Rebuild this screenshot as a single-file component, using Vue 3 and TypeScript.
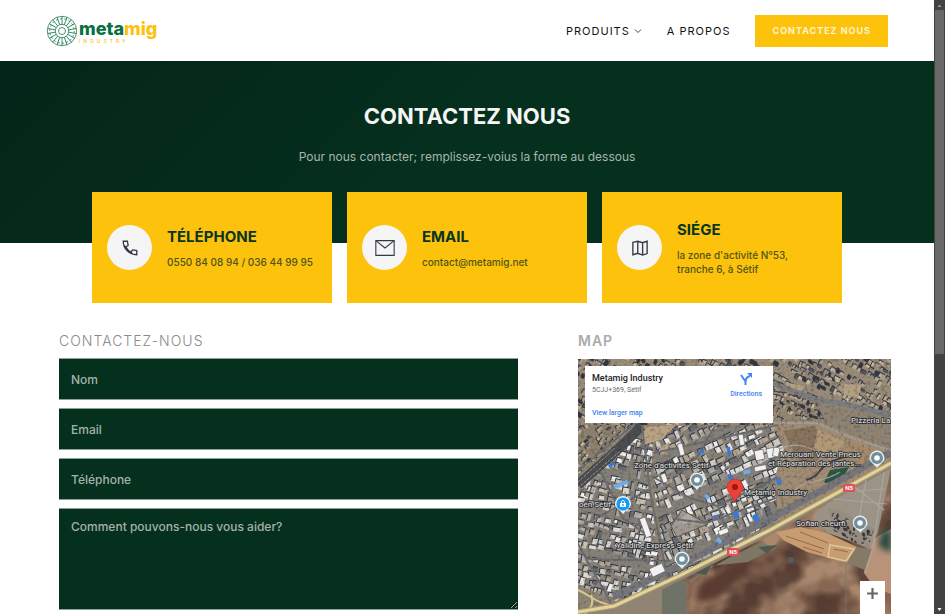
<script setup lang="ts">
import { ref } from 'vue'

interface Block { x: number; y: number; w: number; h: number; turn: number; fill: string }
interface District { id: string; clip: string; angle: number; base: string; blocks: Block[] }

const form = ref({ name: '', email: '', phone: '', message: '' })

const contacts = [
  { icon: 'phone', title: 'TÉLÉPHONE', lines: ['0550 84 08 94 / 036 44 99 95'] },
  { icon: 'mail', title: 'EMAIL', lines: ['contact@metamig.net'] },
  { icon: 'map', title: 'SIÉGE', lines: ["la zone d'activité N°53,", 'tranche 6, à Sétif'] },
]

const spokes = Array.from({ length: 18 }, (_, i) => i * 20)

/* Deterministic generator, so that the aerial view is the same on each load. */
function createRandom(seed: number) {
  let s = seed
  return () => {
    s = (s * 1664525 + 1013904223) % 4294967296
    return s / 4294967296
  }
}

function buildDistrict(
  id: string, clip: string, angle: number, base: string,
  cell: number, scale: number, palette: string[], seed: number,
): District {
  const rnd = createRandom(seed)
  const blocks: Block[] = []
  let row = 0
  for (let y = -220; y < 220; y += cell) {
    row++
    const street = row % 6 === 0
    for (let x = -220; x < 220; x += cell * (0.5 + rnd() * 0.8)) {
      if (street || rnd() < 0.12) continue
      const tall = rnd() < 0.3
      const w = cell * scale * (tall ? 0.4 + rnd() * 0.3 : 0.6 + rnd() * 0.8)
      const h = cell * scale * (tall ? 0.9 + rnd() * 0.5 : 0.4 + rnd() * 0.5)
      const fill = palette[Math.floor(rnd() * palette.length)]
      blocks.push({ x: x + rnd() * 2, y: y + rnd() * 3, w, h, turn: rnd() * 12 - 6, fill })
    }
  }
  return { id, clip, angle, base, blocks }
}

const industrial = ['#f4f3f1', '#e8e5e1', '#cfcbc5', '#b3afa9', '#99958f', '#cdc0ab', '#b3a591', '#6b6c70', '#dedad5']
const housing = ['#b9ad9a', '#a59b8e', '#8f8981', '#c8b799', '#55565a', '#ada28e', '#34363d']

const districts: District[] = [
  buildDistrict('north', '0,0 313,0 313,54 262,42 239,39 195,22 195,66 0,66', 30, '#998b77', 6, 0.8, housing, 11),
  buildDistrict('northeast', '195,27 238,43 246,60 195,62', 20, '#94866f', 5, 0.8, housing, 23),
  buildDistrict('west', '0,132 62,70 76,72 72,130 84,228 38,242 0,226', 14, '#858078', 7, 0.95, industrial, 37),
  buildDistrict('centre', '78,67 196,66 206,90 196,120 200,160 90,222 76,130', -24, '#858078', 8, 0.95, industrial, 53),
  buildDistrict('corner', '0,66 56,66 0,116', -42, '#8d816e', 6, 0.7, housing, 71),
  buildDistrict('east', '250,150 262,151 296,170 290,190 278,184 256,172', 25, '#958c7e', 5, 0.6, ['#34363d', '#9b958c'], 83),
]

const streets = [
  'M0 112 62 60 M64 66 72 132 90 222 M76 94 148 78 200 66',
  'M75 118 112 139 139 147 200 118 M96 160 128 164 198 139 M8 200 92 202 M100 108 118 100 137 67',
  'M0 169 72 130 M23 113 45 159 69 176 M140 147 158 197 M0 185 33 244',
]
const fieldRoads = [
  'M238 64 272 78 313 91 M197 92 C222 80 228 88 260 101 M216 133 C225 119 242 126 262 113',
  'M255 140 309 145 M264 133 307 130 M274 126 306 151 M288 121 280 165 M306 113 295 188 287 214',
]
const blueRoofs = [
  { x: 35, y: 126, a: -20, w: 15, h: 4 }, { x: 30, y: 106, a: -28, w: 7, h: 3 },
  { x: 153, y: 115, a: 65, w: 9, h: 4 }, { x: 165, y: 112, a: -15, w: 7, h: 4 },
  { x: 155, y: 153, a: -15, w: 5, h: 7 }, { x: 174, y: 157, a: -30, w: 5, h: 8 },
  { x: 140, y: 178, a: 40, w: 6, h: 4 }, { x: 120, y: 92, a: -10, w: 6, h: 3 },
  { x: 149, y: 88, a: -5, w: 3, h: 9 }, { x: 126, y: 137, a: -35, w: 4, h: 5 },
  { x: 134, y: 157, a: -15, w: 6, h: 2 }, { x: 198, y: 120, a: -10, w: 5, h: 6 },
]
const whiteRoofs = [
  { x: 67, y: 158, a: 70, w: 20, h: 6 }, { x: 71, y: 210, a: -25, w: 14, h: 9 },
  { x: 87, y: 114, a: 70, w: 9, h: 5 }, { x: 165, y: 75, a: 80, w: 11, h: 5 },
  { x: 176, y: 92, a: -12, w: 9, h: 10 }, { x: 188, y: 90, a: -12, w: 8, h: 10 },
  { x: 104, y: 84, a: 75, w: 12, h: 5 }, { x: 140, y: 172, a: -20, w: 10, h: 5 },
  { x: 176, y: 108, a: -12, w: 12, h: 5 }, { x: 196, y: 88, a: 10, w: 6, h: 9 },
]
const places = [
  { x: 119, y: 121 }, { x: 299, y: 99 }, { x: 282, y: 164 }, { x: 104, y: 200 },
]
const labels = [
  { x: 56, y: 109, text: "Zone d'activités Sétif" },
  { x: 202, y: 98, text: 'Merouani Vente Pneus' },
  { x: 190, y: 107, text: 'et Réparation des jantes...' },
  { x: 166, y: 136, text: 'Metamig Industry' },
  { x: 1, y: 148, text: 'oën Sétif' },
  { x: 38, y: 189, text: 'Yalidine Express Sétif' },
  { x: 218, y: 167, text: 'Sofian cheurfi' },
  { x: 273, y: 64, text: 'Pizzeria La' },
]
const badges = [{ x: 155, y: 193 }, { x: 271, y: 129 }]
</script>

<template>
  <div class="window">
    <div class="page">
      <header class="topbar">
        <a class="brand" href="#">
          <svg class="brand-mark" viewBox="0 0 32 32" aria-hidden="true">
            <g fill="none" stroke="#1d7a50" stroke-width="0.8">
              <circle cx="16" cy="16" r="14.7" />
              <circle cx="16" cy="16" r="12.2" stroke-dasharray="2.2 2.05" />
              <circle cx="16" cy="16" r="6.7" />
              <circle cx="16" cy="16" r="3.5" />
              <path v-for="a in spokes" :key="a" d="M16 9.300V1.300" :transform="`rotate(${a} 16 16)`" />
            </g>
          </svg>
          <span class="brand-text">
            <span class="brand-name">meta<span class="accent">mig</span></span>
            <span class="brand-sub">INDUSTRY</span>
          </span>
        </a>
        <nav class="nav">
          <a href="#produits">PRODUITS
            <svg class="chevron" viewBox="0 0 8 8" aria-hidden="true"><path d="M1 2.500 4 5.500 7 2.500" fill="none" stroke="#444" /></svg>
          </a>
          <a href="#a-propos">A PROPOS</a>
          <a class="cta" href="#contact">CONTACTEZ NOUS</a>
        </nav>
      </header>

      <section class="hero">
        <h1>CONTACTEZ NOUS</h1>
        <p>Pour nous contacter; remplissez-voius la forme au dessous</p>
      </section>

      <section class="cards">
        <article v-for="c in contacts" :key="c.title" class="card">
          <span class="disc">
            <svg viewBox="0 0 24 24" aria-hidden="true" :class="c.icon">
              <path v-if="c.icon === 'phone'" d="M3 3h5.500l1 5.500-3 2.200c1.600 3 3.800 5.200 6.800 6.800l2.200-3 5.500 1V21C11 21 3 13 3 3ZM6.500 10.700 3.800 8.500M13.300 17.500l2.200 2.700" />
              <template v-else-if="c.icon === 'mail'">
                <path d="M2 4h20v16H2Z" />
                <path d="m2 4 10 8L22 4" />
              </template>
              <path v-else d="M2.500 4.500 9 3l6.500 2L21.500 3v16.500l-6 2L9 19l-6.500 2ZM9 3v16M15.500 5v16.500" />
            </svg>
          </span>
          <div>
            <h2>{{ c.title }}</h2>
            <p><span v-for="l in c.lines" :key="l">{{ l }}</span></p>
          </div>
        </article>
      </section>

      <main class="content">
        <form id="contact" @submit.prevent>
          <h3>CONTACTEZ-NOUS</h3>
          <input v-model="form.name" type="text" placeholder="Nom" aria-label="Nom">
          <input v-model="form.email" type="email" placeholder="Email" aria-label="Email">
          <input v-model="form.phone" type="tel" placeholder="Téléphone" aria-label="Téléphone">
          <textarea v-model="form.message" placeholder="Comment pouvons-nous vous aider?" aria-label="Comment pouvons-nous vous aider?" />
        </form>

        <section class="location">
          <h3>MAP</h3>
          <div class="map">
            <svg class="aerial" viewBox="0 0 313 300" preserveAspectRatio="xMinYMin slice" aria-hidden="true">
              <defs>
                <filter id="grain" x="0" y="0" width="100%" height="100%" color-interpolation-filters="sRGB">
                  <feTurbulence type="fractalNoise" baseFrequency="0.3" numOctaves="3" seed="4" />
                  <feColorMatrix values="0 0 0 0 0.12  0 0 0 0 0.13  0 0 0 0 0.17  3.5 0 0 0 -1.750" />
                </filter>
                <filter id="soil" x="0" y="0" width="100%" height="100%" color-interpolation-filters="sRGB">
                  <feTurbulence type="fractalNoise" baseFrequency="0.022 0.028" numOctaves="3" seed="9" />
                  <feColorMatrix values="0 0 0 0 0.29  0 0 0 0 0.2  0 0 0 0 0.17  4 0 0 0 -1.700" />
                </filter>
                <filter id="light" x="0" y="0" width="100%" height="100%" color-interpolation-filters="sRGB">
                  <feTurbulence type="fractalNoise" baseFrequency="0.026" numOctaves="3" seed="21" />
                  <feColorMatrix values="0 0 0 0 0.7  0 0 0 0 0.57  0 0 0 0 0.46  0 5 0 0 -2.200" />
                </filter>
                <filter id="soft"><feGaussianBlur stdDeviation="3" /></filter>
                <filter id="lens" x="0" y="0" width="100%" height="100%" color-interpolation-filters="sRGB"><feGaussianBlur stdDeviation="0.4" /></filter>
                <clipPath id="south"><path d="M84 231 192 176 313 109V300H84Z" /></clipPath>
                <clipPath id="urban"><path d="M0 0H313V104L192 171 36 247 0 253Z" /></clipPath>
                <clipPath v-for="d in districts" :id="`clip-${d.id}`" :key="d.id"><polygon :points="d.clip" /></clipPath>
              </defs>

              <g filter="url(#lens)">
                <rect width="313" height="300" fill="#8f8473" />
                <path d="M195 62 240 62 313 92V108L200 165Z" fill="#a08b73" />
                <path d="M205 72 235 67 252 92 225 110Z" fill="#88745d" />
                <path d="M240 70 267 83 252 101 236 89Z" fill="#b29877" />
                <path d="M272 82 308 96 300 108 262 98Z" fill="#a4896b" />
                <path d="M252 111 271 108 263 123 246 124Z" fill="#2c5845" />

                <g clip-path="url(#south)">
                  <rect x="84" y="105" width="229" height="195" fill="#876753" />
                  <rect x="84" y="105" width="229" height="195" filter="url(#light)" opacity="0.8" />
                  <rect x="84" y="105" width="229" height="195" filter="url(#soil)" opacity="0.8" />
                  <path d="M120 226 152 205 176 196 170 214 140 240 118 244Z" fill="#583b30" filter="url(#soft)" />
                  <path d="M84 222 108 222 108 300H84Z" fill="#6f7266" />
                  <path d="M110 222 152 198 182 184 198 188 170 203 132 207 114 224Z" fill="#7f7766" />
                  <path d="M116 214 134 205 128 216ZM180 188 200 186 188 194Z" fill="#4a5b52" />
                  <path d="M290 183 313 170V235L296 228 286 214Z" fill="#b8937a" />
                  <path d="M303 175 313 168V194L300 187Z" fill="#284941" filter="url(#soft)" />
                  <path d="M255 139 313 109 300 173 292 189 250 174 235 157Z" fill="#9a9386" />
                  <path d="M198 173 222 168 249 174 279 188 269 204 229 193 205 181Z" fill="#c79c71" />
                  <path d="M252 186 276 190 268 202 250 198Z" fill="none" stroke="#dec79c" stroke-width="1.500" />
                  <path d="M208 177 246 190M222 173 250 184M225 188 244 194M256 190 270 193" fill="none" stroke="#94694a" />
                  <path d="M269 204 279 188 294 190 287 211Z" fill="#857968" />
                  <circle cx="213" cy="201" r="3" fill="#545d66" />
                  <path d="M268 202V300M109 222V300" stroke="#837a71" stroke-width="0.700" />
                </g>

                <g v-for="d in districts" :key="d.id" :clip-path="`url(#clip-${d.id})`">
                  <polygon :points="d.clip" :fill="d.base" />
                  <g :transform="`translate(140 110) rotate(${d.angle})`">
                    <g v-for="(b, i) in d.blocks" :key="i" :transform="`rotate(${b.turn} ${b.x} ${b.y})`">
                      <rect :x="b.x - 1" :y="b.y - 1" :width="b.w" :height="b.h" fill="#363a43" />
                      <rect :x="b.x" :y="b.y" :width="b.w" :height="b.h" :fill="b.fill" />
                    </g>
                  </g>
                </g>

                <path d="M200 22 226 27 222 34 200 20ZM262 24 284 26 280 38 266 36Z" fill="#b5a080" />
                <path d="M62 68 98 66 84 80 66 86ZM80 88 92 84 88 96Z" fill="#b9a384" />
                <path d="M93 167 104 151 130 165 99 178Z" fill="#9f9991" stroke="#5b5751" />
                <path d="M100 165 109 154 121 164Z" fill="#b3ada4" />
                <g fill="none" stroke-linejoin="round">
                  <path d="M0 126 38 92 64 67" stroke="#4b4d50" stroke-width="10" />
                  <path d="M0 123 37 89 M0 129 42 92" stroke="#9b9690" stroke-dasharray="3 1" />
                  <path v-for="s in streets" :key="s" :d="s" stroke="#6c6d70" stroke-width="2" />
                  <path v-for="s in fieldRoads" :key="s" :d="s" stroke="#aca69b" stroke-width="1.200" />
                  <path d="M228 121C248 115 234 108 266 98" stroke="#424548" stroke-width="2" />
                  <path d="M195 24 239 41 262 44 313 56" stroke="#7d7d80" stroke-width="5" />
                  <path d="M195 64 239 64 272 78 313 92" stroke="#a09b93" stroke-width="2" />
                  <path d="M35 238 96 209 157 178 192 160 313 93" stroke="#77767a" stroke-width="7" />
                </g>
                <g clip-path="url(#urban)">
                  <rect width="313" height="300" filter="url(#grain)" opacity="0.25" />
                </g>
                <rect
                  v-for="(r, i) in whiteRoofs" :key="`white-${i}`" :x="r.x" :y="r.y" :width="r.w" :height="r.h"
                  :transform="`rotate(${r.a} ${r.x} ${r.y})`" fill="#f1f1f0" stroke="#55575c" stroke-width="0.600"
                />
                <rect
                  v-for="(r, i) in blueRoofs" :key="`blue-${i}`" :x="r.x" :y="r.y" :width="r.w" :height="r.h"
                  :transform="`rotate(${r.a} ${r.x} ${r.y})`" :fill="i % 3 === 0 ? '#6daeea' : '#3978d4'"
                />
                <g fill="none">
                  <path d="M0 231C12 236 20 246 40 247 M13 236C18 248 7 256 0 260" stroke="#d6c791" stroke-width="2" />
                  <path d="M0 253 36 247 103 216 192 171 313 104" stroke="#ab9b70" stroke-width="5" />
                  <path d="M0 253 36 247 103 216 192 171 313 104" stroke="#e3d49b" stroke-width="3" />
                </g>
              </g>

              <g v-for="b in badges" :key="b.x">
                <rect :x="b.x - 6" :y="b.y - 4" width="12" height="8" rx="1" fill="#dc5258" />
                <text class="badge" :x="b.x" :y="b.y + 2" text-anchor="middle">N5</text>
              </g>
              <text v-for="l in labels" :key="l.text" class="label" :x="l.x" :y="l.y">{{ l.text }}</text>
              <g v-for="p in places" :key="p.x" :transform="`translate(${p.x} ${p.y})`">
                <path d="M-7.500 0a7.500 7.500 0 1 1 15 0C7.500 4 3 6 0 10-3 6-7.500 4-7.500 0Z" fill="#e6edf0" />
                <circle r="6" fill="#708e9a" />
                <circle r="2.800" fill="#fff" />
              </g>
              <g transform="translate(45 145)">
                <path d="M-8 0a8 8 0 1 1 16 0C8 4 3 6 0 10-3 6-8 4-8 0Z" fill="#e9f4fc" />
                <circle r="6.600" fill="#159bf3" />
                <path d="M-3-1h6v4h-6Z" fill="#fff" />
                <path d="M-1.500-1v-1a1.500 1.500 0 0 1 3 0v1" fill="none" stroke="#fff" stroke-width="0.800" />
                <circle cy="1" r="0.900" fill="#159bf3" />
              </g>
              <g transform="translate(157 129)">
                <path d="M0 15C-1 8-8 6-8-1a8 8 0 0 1 16 0C8 6 1 8 0 15Z" fill="#ea4335" stroke="#c5221f" stroke-width="0.500" />
                <circle r="3" cy="-1" fill="#a61513" />
              </g>
            </svg>

            <div class="place">
              <div class="place-info">
                <strong>Metamig Industry</strong>
                <span>5CJJ+369, Sétif</span>
                <a href="#map">View larger map</a>
              </div>
              <a class="directions" href="#directions">
                <svg viewBox="0 0 14 14" aria-hidden="true">
                  <path d="M6.500 13V9.500L2 3M6.500 9.500C7 6 8 4.500 11 4" fill="none" stroke="#4285f4" stroke-width="2" />
                  <path d="M8 1h5v5Z" fill="#4285f4" />
                </svg>
                Directions
              </a>
            </div>
            <button class="zoom" type="button" aria-label="Zoom">
              <svg viewBox="0 0 12 12" aria-hidden="true"><path d="M6 1v10M1 6h10" stroke="#666" stroke-width="2" /></svg>
            </button>
          </div>
        </section>
      </main>
    </div>
    <div class="scrollbar" aria-hidden="true">
      <svg viewBox="0 0 11 10"><path d="M3.500 7h4L5.500 4.500Z" fill="#999" /></svg>
      <span class="thumb" />
      <svg viewBox="0 0 11 10"><path d="M3.500 4h4L5.500 7Z" fill="#fff" /></svg>
    </div>
  </div>
</template>

<style>
body { margin: 0; overflow: hidden; }
</style>

<style scoped>
* { box-sizing: border-box; }
.window {
  display: flex;
  height: 100vh;
  overflow: hidden;
  background: #fff;
  font-family: Inter, "Liberation Sans", sans-serif;
}
.page { flex: 1; min-width: 0; }
a { color: inherit; text-decoration: none; }
h1, h2, h3, p { margin: 0; }

.topbar {
  display: flex;
  align-items: center;
  justify-content: space-between;
  height: 61px;
  padding: 0 46px;
}
.brand { display: flex; align-items: center; gap: 1px; }
.brand-mark { width: 32px; height: 32px; }
.brand-text { display: flex; flex-direction: column; }
.brand-name { color: #087043; font-size: 18px; font-weight: 800; line-height: 21px; }
.accent { color: #fdc20b; }
.brand-sub { color: #fdc20b; font-size: 5px; font-weight: 500; letter-spacing: 3px; line-height: 5px; }
.nav { display: flex; align-items: center; gap: 25px; color: #111; font-size: 11px; letter-spacing: 1px; }
.nav a { display: flex; align-items: center; }
.chevron { width: 8px; height: 8px; margin-left: 4px; }
.nav .cta {
  height: 32px;
  padding: 0 17px;
  background: #fdc20b;
  color: #fdf3d0;
  font-size: 9px;
  font-weight: 700;
}

.hero {
  height: 182px;
  padding-top: 40px;
  background: linear-gradient(135deg, #042519, #05301e 50%);
  color: #f5f5f5;
  text-align: center;
}
.hero h1 { font-size: 22px; font-weight: 700; line-height: 30px; }
.hero p { margin-top: 18px; color: #a5b5ac; font-size: 12px; line-height: 16px; }

.cards {
  display: grid;
  grid-template-columns: repeat(3, 1fr);
  gap: 15px;
  max-width: 750px;
  margin: -51px auto 0;
}
.card { display: flex; align-items: center; gap: 15px; height: 111px; padding: 0 15px; background: #fdc20b; }
.disc { display: flex; align-items: center; justify-content: center; flex: none; width: 45px; height: 45px; border-radius: 50%; background: #f5f5f5; }
.disc svg { width: 18px; height: 18px; fill: none; stroke: #343a45; stroke-width: 1.8; }
.disc .mail { width: 22px; height: 22px; stroke-width: 1.2; }
.card h2 { color: #07351f; font-size: 15px; font-weight: 700; line-height: 20px; }
.card p { margin-top: 8px; color: #4f5519; font-size: 10px; font-weight: 500; line-height: 14px; }
.card p span { display: block; }

.content { display: grid; grid-template-columns: 459fr 313fr; gap: 60px; padding: 30px 43px 0 59px; }
h3 { height: 25px; color: #8a8a8c; font-size: 14px; font-weight: 300; letter-spacing: 1px; line-height: 16px; }
.location h3 { color: #aaabad; font-weight: 600; }
form { display: flex; flex-direction: column; }
input, textarea {
  display: block;
  width: 100%;
  height: 42px;
  margin: 0 0 8px;
  padding: 0 12px;
  border: solid #8da196;
  border-width: 1px 0;
  border-radius: 0;
  background: #05301e;
  color: #fff;
  font: 500 12px/16px Inter, "Liberation Sans", sans-serif;
}
textarea { height: 102px; padding-top: 10px; resize: vertical; }
::placeholder { color: #a3b3a9; opacity: 1; }

.map { position: relative; height: 300px; margin-top: 1px; overflow: hidden; }
.aerial { display: block; width: 100%; height: 100%; }
.label { fill: #d3d3d3; stroke: #25272a; stroke-width: 1.5px; paint-order: stroke; font: 500 8px Roboto, sans-serif; }
.badge { fill: #fff; font: 700 6px Roboto, sans-serif; }
.place {
  position: absolute;
  top: 7px;
  left: 7px;
  display: flex;
  justify-content: space-between;
  width: 188px;
  height: 57px;
  padding: 6px 11px 0 7px;
  background: #fff;
  font-family: Roboto, sans-serif;
  font-size: 7px;
}
.place a { color: #3b82f0; font-weight: 500; }
.place-info { display: flex; flex-direction: column; color: #666; line-height: 12px; }
.place-info strong { color: #222; font-size: 9px; font-weight: 500; }
.place-info a { margin-top: 11px; }
.directions { display: flex; flex-direction: column; align-items: center; gap: 3px; line-height: 10px; }
.directions svg { width: 14px; height: 14px; }
.zoom { position: absolute; top: 222px; right: 6px; width: 25px; height: 50px; padding: 6px; border: 0; background: #fff; }
.zoom svg { display: block; width: 13px; height: 13px; margin-bottom: 25px; }

.scrollbar { display: flex; flex-direction: column; flex: none; width: 11px; background: #424242; }
.scrollbar svg { flex: none; width: 11px; height: 10px; }
.thumb { height: 56%; margin: 0 1px auto; background: #686868; }
</style>
